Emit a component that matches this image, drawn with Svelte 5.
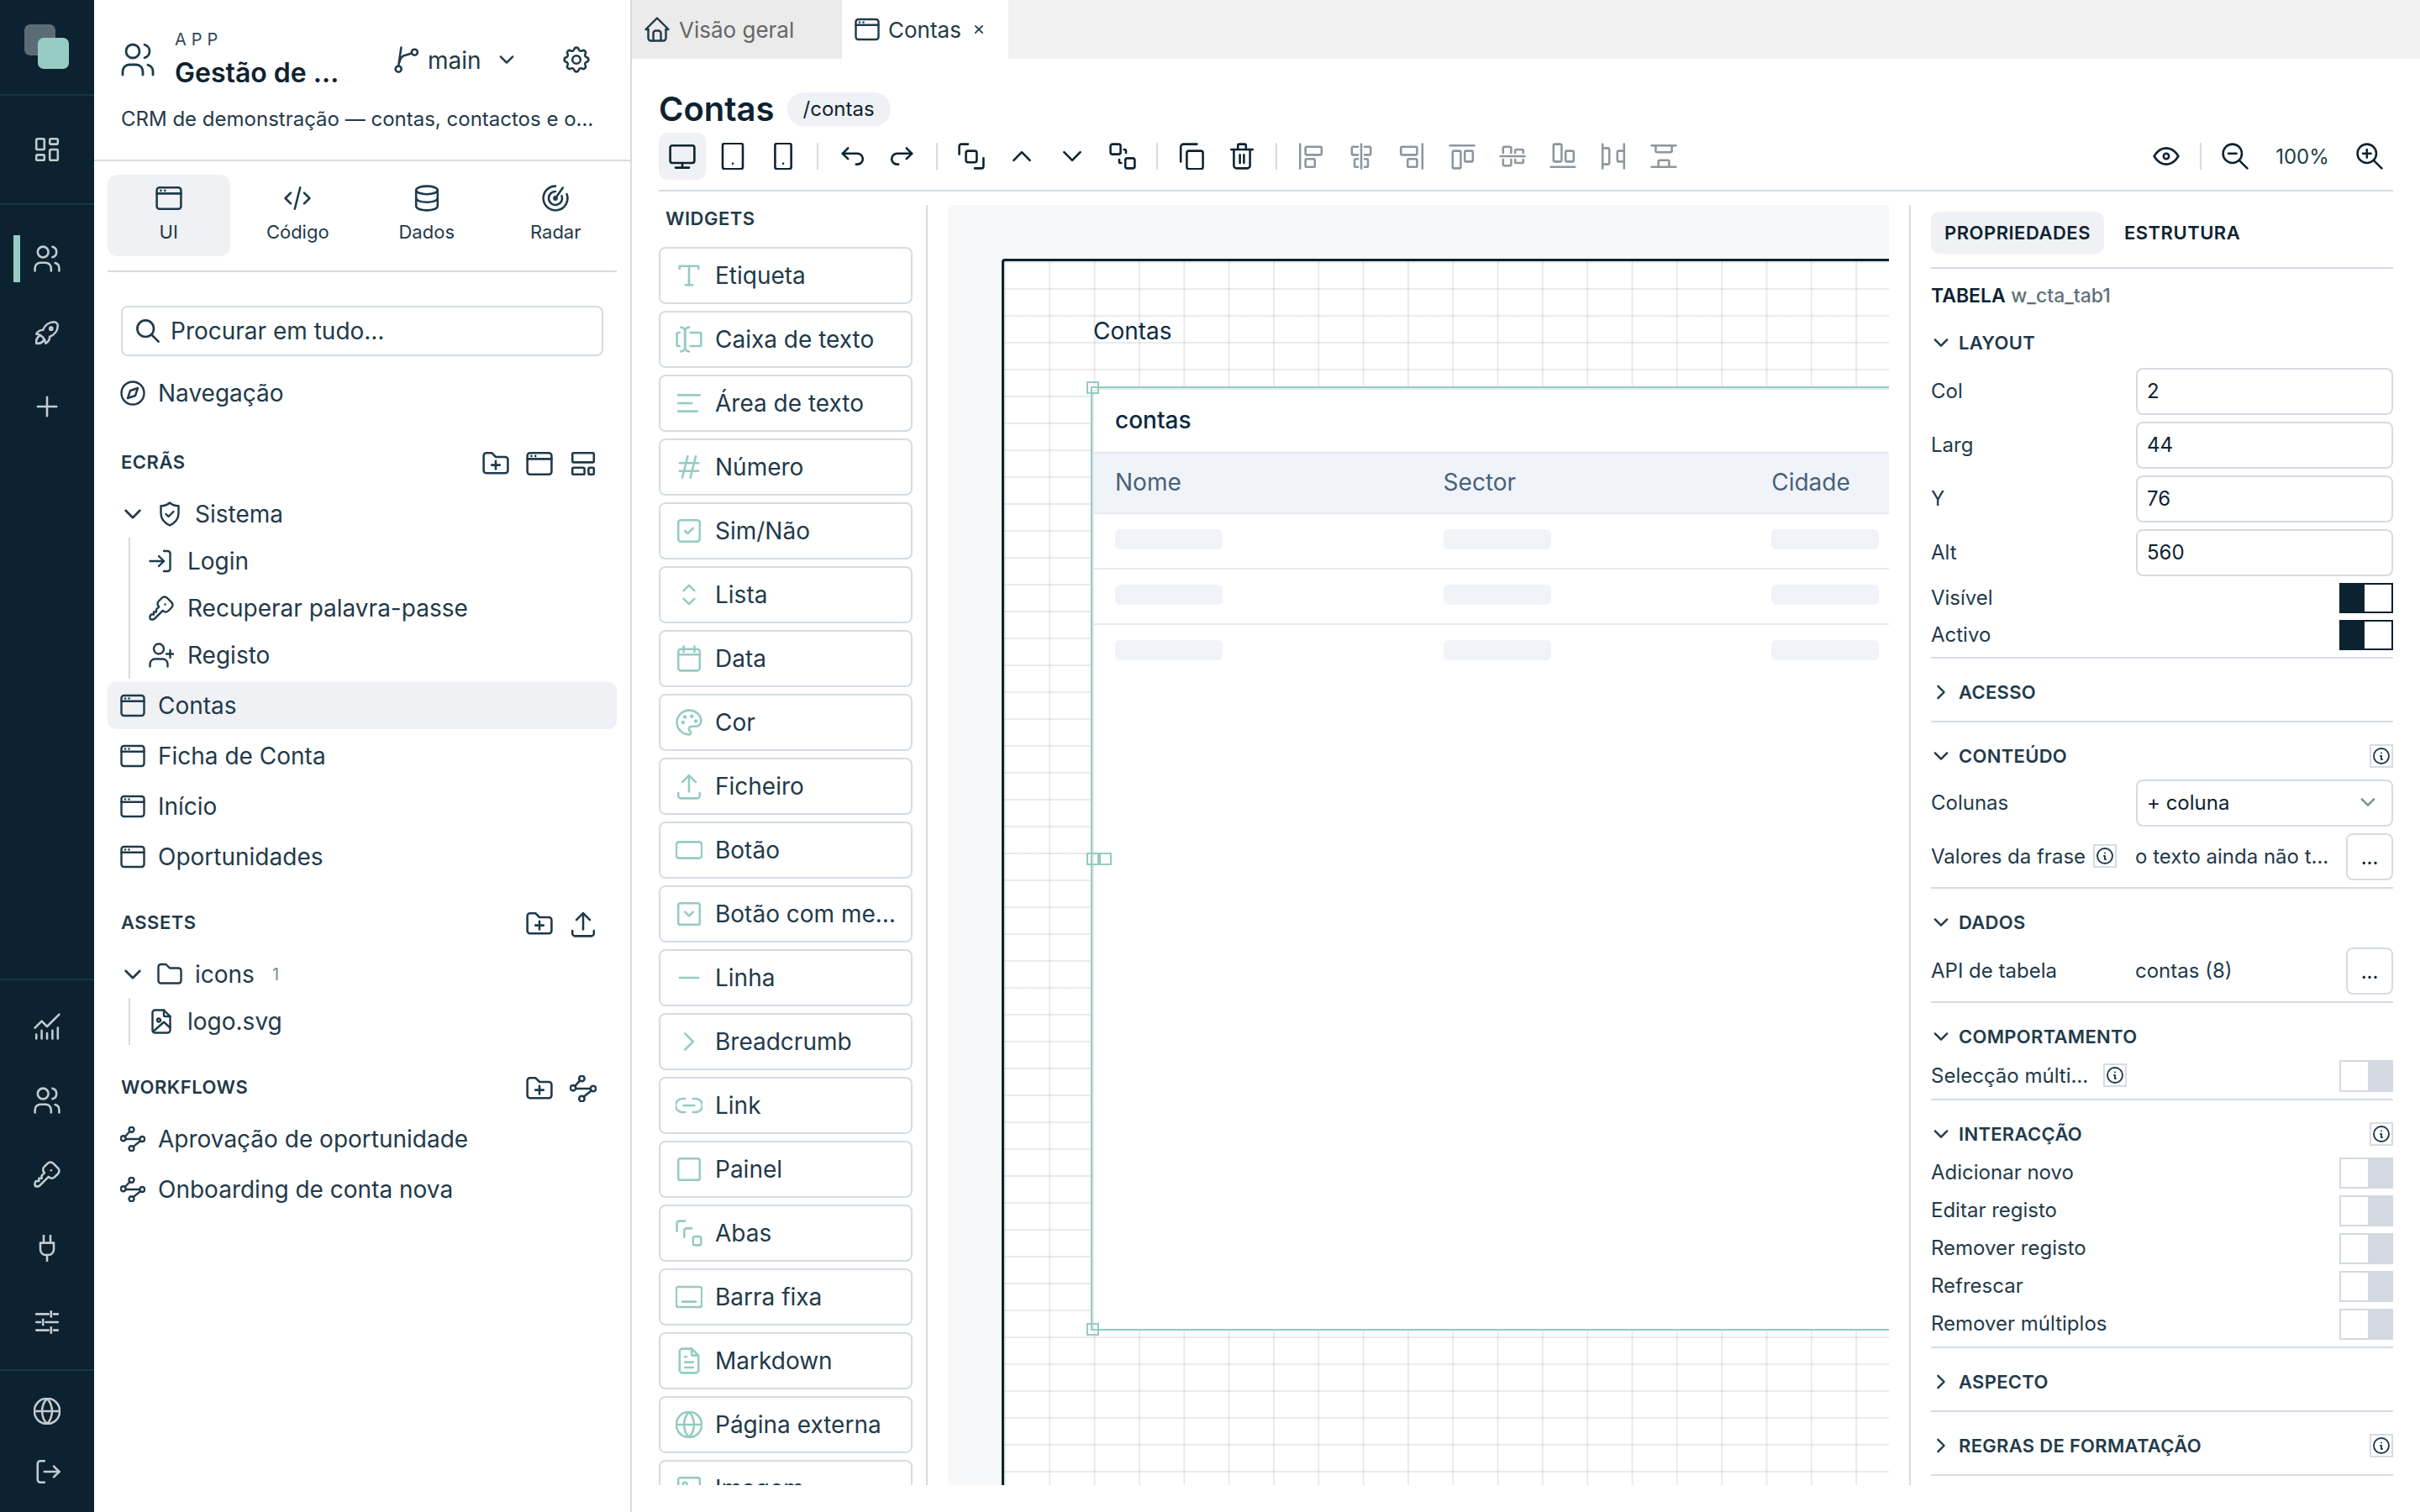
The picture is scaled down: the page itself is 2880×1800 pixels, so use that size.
<script>
  const c = (x, y, r) => `M${x - r} ${y}a${r} ${r} 0 1 0 ${r * 2} 0a${r} ${r} 0 1 0 ${-r * 2} 0`;
  const rr = (x, y, w, h, r = 1) =>
    `M${x + r} ${y}h${w - 2 * r}a${r} ${r} 0 0 1 ${r} ${r}v${h - 2 * r}a${r} ${r} 0 0 1 ${-r} ${r}h${-(w - 2 * r)}a${r} ${r} 0 0 1 ${-r} ${-r}v${-(h - 2 * r)}a${r} ${r} 0 0 1 ${r} ${-r}`;

  const folder = 'M5 4h4l3 3h7a2 2 0 0 1 2 2v8a2 2 0 0 1 -2 2h-14a2 2 0 0 1 -2 -2v-11a2 2 0 0 1 2 -2';
  const fileBody = 'M17 21h-10a2 2 0 0 1 -2 -2v-14a2 2 0 0 1 2 -2h7l5 5v11a2 2 0 0 1 -2 2z';

  const icons = {
    users: [c(9, 7, 4), 'M3 21v-2a4 4 0 0 1 4 -4h4a4 4 0 0 1 4 4v2', 'M16 3.13a4 4 0 0 1 0 7.75', 'M21 21v-2a4 4 0 0 0 -3 -3.85'],
    dashboard: [rr(4, 4, 6, 8), rr(4, 16, 6, 4), rr(14, 12, 6, 8), rr(14, 4, 6, 4)],
    rocket: ['M4 13a8 8 0 0 1 7 7a6 6 0 0 0 3 -5a9 9 0 0 0 6 -8a3 3 0 0 0 -3 -3a9 9 0 0 0 -8 6a6 6 0 0 0 -5 3', 'M7 14a6 6 0 0 0 -3 6a6 6 0 0 0 6 -3', c(15, 9, 1)],
    plus: ['M12 5v14', 'M5 12h14'],
    chart: ['M3 13l5 -5l4 4l9 -9', 'M4 21v-3', 'M8 21v-6', 'M12 21v-4', 'M16 21v-6', 'M20 21v-8'],
    key: ['M16.555 3.843l3.602 3.602a2.877 2.877 0 0 1 0 4.069l-2.643 2.643a2.877 2.877 0 0 1 -4.069 0l-.301 -.301l-6.558 6.558a2 2 0 0 1 -1.239 .578l-.175 .008h-1.172a1 1 0 0 1 -.993 -.883l-.007 -.117v-1.172a2 2 0 0 1 .467 -1.284l.119 -.13l.414 -.414h2v-2h2v-2l2.144 -2.144l-.301 -.301a2.877 2.877 0 0 1 0 -4.069l2.643 -2.643a2.877 2.877 0 0 1 4.069 0', 'M15 9h.01'],
    plug: ['M12 22v-5', 'M9.5 8v-6', 'M14.5 8v-6', 'M7 8h10v5a4 4 0 0 1 -4 4h-2a4 4 0 0 1 -4 -4z'],
    sliders: ['M4 6h9', 'M17 6h3', 'M15 4v4', 'M4 12h3', 'M11 12h9', 'M9 10v4', 'M4 18h9', 'M17 18h3', 'M15 16v4'],
    globe: [c(12, 12, 9.5), 'M12 2.5a14 14 0 0 0 0 19a14 14 0 0 0 0 -19', 'M2.5 12h19'],
    logout: ['M10 4h-3a2 2 0 0 0 -2 2v12a2 2 0 0 0 2 2h3', 'M10 12h11', 'M17 8l4 4l-4 4'],
    login: ['M14 4h3a2 2 0 0 1 2 2v12a2 2 0 0 1 -2 2h-3', 'M3 12h11', 'M10 8l4 4l-4 4'],
    branch: [c(6.5, 19, 2.2), c(18.5, 6.5, 2.2), 'M8.5 3l-2 13.8', 'M7.2 14c.4 -3 2 -5 5 -5.5l4 -1.2'],
    gear: ['M10.325 4.317c.426 -1.756 2.924 -1.756 3.35 0a1.724 1.724 0 0 0 2.573 1.066c1.543 -.94 3.31 .826 2.37 2.37a1.724 1.724 0 0 0 1.065 2.572c1.756 .426 1.756 2.924 0 3.35a1.724 1.724 0 0 0 -1.066 2.573c.94 1.543 -.826 3.31 -2.37 2.37a1.724 1.724 0 0 0 -2.572 1.065c-.426 1.756 -2.924 1.756 -3.35 0a1.724 1.724 0 0 0 -2.573 -1.066c-1.543 .94 -3.31 -.826 -2.37 -2.37a1.724 1.724 0 0 0 -1.065 -2.572c-1.756 -.426 -1.756 -2.924 0 -3.35a1.724 1.724 0 0 0 1.066 -2.573c-.94 -1.543 .826 -3.31 2.37 -2.37c1 .608 2.296 .07 2.572 -1.065', 'M9 12a3 3 0 1 0 6 0a3 3 0 0 0 -6 0'],
    window: [rr(3, 4, 18, 16, 2), 'M3 8.5h18', 'M6 6.3h.01', 'M9 6.3h.01'],
    code: ['M7 8l-4 4l4 4', 'M17 8l4 4l-4 4', 'M14 4l-4 16'],
    database: ['M4 6a8 3 0 1 0 16 0a8 3 0 1 0 -16 0', 'M4 6v6a8 3 0 0 0 16 0v-6', 'M4 12v6a8 3 0 0 0 16 0v-6'],
    radar: [c(12, 12, 1), 'M12 7a5 5 0 1 0 4.7 3.29', 'M12 3a9 9 0 1 0 8.46 5.92', 'M12 12l5.5 -7.8'],
    search: [c(10, 10, 7), 'M21 21l-6 -6'],
    compass: ['M8 16l2 -6l6 -2l-2 6l-6 2', c(12, 12, 9)],
    folderPlus: [folder, 'M12 10v6', 'M9 13h6'],
    folder: [folder],
    layout: [rr(4, 4, 16, 7), rr(4, 15, 9, 5), rr(16, 15, 4, 5)],
    shield: ['M12 3a10 10 0 0 0 7 2.5v6c0 4.5 -3 7.5 -7 9.5c-4 -2 -7 -5 -7 -9.5v-6a10 10 0 0 0 7 -2.5', 'M9 12l2 2l4 -4'],
    down: ['M6 9l6 6l6 -6'],
    right: ['M9 6l6 6l-6 6'],
    up: ['M6 15l6 -6l6 6'],
    userPlus: [c(10, 7, 4), 'M3 21v-2a4 4 0 0 1 4 -4h6a4 4 0 0 1 4 4v2', 'M19 8v6', 'M16 11h6'],
    fileImage: ['M14 3v4a1 1 0 0 0 1 1h4', fileBody, c(10, 11, 1.3), 'M5.5 20l8.5 -7.5l5 4.5'],
    upload: ['M4 17v2a2 2 0 0 0 2 2h12a2 2 0 0 0 2 -2v-2', 'M7 9l5 -5l5 5', 'M12 4v12'],
    flow: [c(11, 4.5, 2), c(4.5, 11.5, 2), c(19.5, 12, 2), c(11, 19.5, 2), 'M9.6 6l-3.7 4', 'M6.5 12h11', 'M18 13.5l-5.6 4.6'],
    home: ['M5 12h-2l9 -9l9 9h-2', 'M5 12v7a2 2 0 0 0 2 2h10a2 2 0 0 0 2 -2v-7', 'M9 21v-6a2 2 0 0 1 2 -2h2a2 2 0 0 1 2 2v6'],
    x: ['M18 6l-12 12', 'M6 6l12 12'],
    desktop: [rr(3, 4, 18, 13, 1.5), 'M7 20.5h10', 'M12 17v3.5'],
    tablet: [rr(4.5, 2.5, 15, 19, 1.5), 'M12 17.5h.01'],
    phone: [rr(6, 2.5, 12, 19, 1.5), 'M12 17.5h.01'],
    undo: ['M9 14l-4 -4l4 -4', 'M5 10h11a4 4 0 1 1 0 8h-1'],
    redo: ['M15 14l4 -4l-4 -4', 'M19 10h-11a4 4 0 1 0 0 8h1'],
    group: ['M3 10.5v-6a1.5 1.5 0 0 1 1.5 -1.5h5', rr(8, 8, 8, 8.5, 1.5), 'M21 13.5v6a1.5 1.5 0 0 1 -1.5 1.5h-5'],
    ungroup: [rr(3, 3, 7.5, 7.5, 1.5), rr(14, 13.5, 7, 7.5, 1.5), 'M13 7h.5a1 1 0 0 1 1 1v1.5', 'M11 17h-.5a1 1 0 0 1 -1 -1v-1.5'],
    tabs: ['M3 10.5v-6a1.5 1.5 0 0 1 1.5 -1.5h4.5', 'M8.5 15v-5a1.5 1.5 0 0 1 1.5 -1.5h4', rr(15, 14.5, 6, 6.5, 1.5)],
    copy: [rr(8.5, 8, 12, 13.5, 1.5), 'M4 16v-11a2 2 0 0 1 2 -2h10'],
    trash: ['M4 7h16', 'M10.5 11v6', 'M13.5 11v6', 'M6 7v12a2 2 0 0 0 2 2h8a2 2 0 0 0 2 -2v-12', 'M9 7v-3a1 1 0 0 1 1 -1h4a1 1 0 0 1 1 1v3'],
    alLeft: ['M4 3v18', rr(8, 5, 12, 6), rr(8, 14, 7, 6)],
    alCenter: ['M12 3v18', 'M9.5 5h-3.5a1 1 0 0 0 -1 1v4a1 1 0 0 0 1 1h3.5', 'M14.5 5h3.5a1 1 0 0 1 1 1v4a1 1 0 0 1 -1 1h-3.5', 'M9.5 14h-1.5a1 1 0 0 0 -1 1v4a1 1 0 0 0 1 1h1.5', 'M14.5 14h1.5a1 1 0 0 1 1 1v4a1 1 0 0 1 -1 1h-1.5'],
    alRight: ['M20 3v18', rr(4, 5, 12, 6), rr(9, 14, 7, 6)],
    alTop: ['M3 4h18', rr(5, 8, 6, 13), rr(14, 8, 6, 8)],
    alMiddle: ['M3 12h18', 'M5 9.5v-3.5a1 1 0 0 1 1 -1h4a1 1 0 0 1 1 1v3.5', 'M14 9.5v-1.5a1 1 0 0 1 1 -1h4a1 1 0 0 1 1 1v1.5', 'M5 14.5v3.5a1 1 0 0 0 1 1h4a1 1 0 0 0 1 -1v-3.5', 'M14 14.5v1.5a1 1 0 0 0 1 1h4a1 1 0 0 0 1 -1v-1.5'],
    alBottom: ['M3 20h18', rr(5, 3, 6, 13), rr(14, 8, 6, 8)],
    distH: ['M4 3v18', 'M4 6h4a1 1 0 0 1 1 1v10a1 1 0 0 1 -1 1h-4', 'M20 3v18', 'M20 8h-4a1 1 0 0 0 -1 1v6a1 1 0 0 0 1 1h4'],
    distV: ['M3 4h18', 'M6 4v4a1 1 0 0 0 1 1h10a1 1 0 0 0 1 -1v-4', 'M3 20h18', 'M8 20v-4a1 1 0 0 1 1 -1h6a1 1 0 0 1 1 1v4'],
    eye: ['M10 12a2 2 0 1 0 4 0a2 2 0 0 0 -4 0', 'M21 12c-2.4 4 -5.4 6 -9 6c-3.6 0 -6.6 -2 -9 -6c2.4 -4 5.4 -6 9 -6c3.6 0 6.6 2 9 6'],
    zoomOut: [c(10, 10, 7), 'M7 10h6', 'M21 21l-6 -6'],
    zoomIn: [c(10, 10, 7), 'M7 10h6', 'M10 7v6', 'M21 21l-6 -6'],
    info: [c(12, 12, 9), 'M12 8.5h.01', 'M11 12h1v4h1'],
    wLabel: ['M5 7v-2h14v2', 'M12 5v14', 'M9.5 19h5'],
    wInput: ['M12 3a3 3 0 0 0 -3 3v12a3 3 0 0 0 3 3', 'M6 3a3 3 0 0 1 3 3v12a3 3 0 0 1 -3 3', 'M13 7h7a1 1 0 0 1 1 1v8a1 1 0 0 1 -1 1h-7', 'M5 7h-1a1 1 0 0 0 -1 1v8a1 1 0 0 0 1 1h1'],
    wArea: ['M4 6h16', 'M4 12h10', 'M4 18h14'],
    wHash: ['M5 9h14', 'M5 15h14', 'M11 4l-4 16', 'M17 4l-4 16'],
    wCheck: [rr(4, 4, 16, 16, 2), 'M9 12l2 2l4 -4'],
    wSelect: ['M8 9l4 -4l4 4', 'M16 15l-4 4l-4 -4'],
    wDate: [rr(4, 5, 16, 16, 2), 'M16 3v4', 'M8 3v4', 'M4 9h16'],
    wColor: ['M12 21a9 9 0 0 1 0 -18c4.97 0 9 3.582 9 8c0 1.06 -.474 2.078 -1.318 2.828c-.844 .75 -1.989 1.172 -3.182 1.172h-2.5a2 2 0 0 0 -1 3.75a1.3 1.3 0 0 1 -1 2.25', c(7.5, 12, .6), c(9, 8, .6), c(14, 7.5, .6), c(17, 11, .6)],
    wButton: [rr(2.5, 6, 19, 12, 2)],
    wMenu: [rr(4, 4, 16, 16, 1.5), 'M9 10.5l3 3l3 -3'],
    wLine: ['M5 12h14'],
    wLink: ['M9 17h-2a5 5 0 0 1 0 -10h2', 'M15 7h2a5 5 0 1 1 0 10h-2', 'M8 12h8'],
    wPanel: [rr(4, 4, 16, 16, 1.5)],
    wBar: [rr(2.5, 4.5, 19, 15, 1.5), 'M7 15.5h10'],
    wDoc: ['M14 3v4a1 1 0 0 0 1 1h4', fileBody, 'M9 9h1', 'M9 13h6', 'M9 17h6'],
    wImage: [rr(4, 4, 16, 16, 1.5), c(9, 9, 1.5), 'M4 17l5 -4l4 3l3 -2l4 3']
  };

  const railTop = ['users', 'rocket', 'plus'];
  const railLow = ['chart', 'users', 'key', 'plug', 'sliders'];
  const modes = [
    { icon: 'window', label: 'UI', on: true },
    { icon: 'code', label: 'Código' },
    { icon: 'database', label: 'Dados' },
    { icon: 'radar', label: 'Radar' }
  ];
  const authScreens = [
    { icon: 'login', label: 'Login' },
    { icon: 'key', label: 'Recuperar palavra-passe' },
    { icon: 'userPlus', label: 'Registo' }
  ];
  const screens = ['Contas', 'Ficha de Conta', 'Início', 'Oportunidades'];

  const tools = [
    ['desktop', 'tablet', 'phone'],
    ['undo', 'redo'],
    ['group', 'up', 'down', 'ungroup'],
    ['copy', 'trash']
  ];
  const aligns = ['alLeft', 'alCenter', 'alRight', 'alTop', 'alMiddle', 'alBottom', 'distH', 'distV'];

  const widgets = [
    ['wLabel', 'Etiqueta'], ['wInput', 'Caixa de texto'], ['wArea', 'Área de texto'], ['wHash', 'Número'],
    ['wCheck', 'Sim/Não'], ['wSelect', 'Lista'], ['wDate', 'Data'], ['wColor', 'Cor'], ['upload', 'Ficheiro'],
    ['wButton', 'Botão'], ['wMenu', 'Botão com me…'], ['wLine', 'Linha'], ['right', 'Breadcrumb'], ['wLink', 'Link'],
    ['wPanel', 'Painel'], ['tabs', 'Abas'], ['wBar', 'Barra fixa'], ['wDoc', 'Markdown'], ['globe', 'Página externa'],
    ['wImage', 'Imagem']
  ];

  const layoutFields = [['Col', '2'], ['Larg', '44'], ['Y', '76'], ['Alt', '560']];
  const interactions = ['Adicionar novo', 'Editar registo', 'Remover registo', 'Refrescar', 'Remover múltiplos'];
</script>

{#snippet ic(name, cls = '')}
  <svg class="ic {cls}" viewBox="2 2 20 20" aria-hidden="true">
    {#each icons[name] as d}<path {d} />{/each}
  </svg>
{/snippet}

{#snippet sectionHead(title, open, info = false)}
  <div class="sec-head">
    {@render ic(open ? 'down' : 'right', 's24')}
    <span>{title}</span>
    {#if info}<span class="info push">{@render ic('info', 's20')}</span>{/if}
  </div>
{/snippet}

<div class="app">
  <nav class="rail">
    <div class="logo"><i class="sq back"></i><i class="sq front"></i></div>
    <div class="rail-home"><span class="rail-item">{@render ic('dashboard', 's32')}</span></div>
    <div class="rail-top">
      {#each railTop as name, i}
        <span class="rail-item" class:on={i === 0}>{@render ic(name, 's32')}</span>
      {/each}
    </div>
    <div class="rail-low">
      {#each railLow as name}
        <span class="rail-item">{@render ic(name, 's32')}</span>
      {/each}
    </div>
    <div class="rail-end">
      <span class="rail-item small">{@render ic('globe', 's32')}</span>
      <span class="rail-item small">{@render ic('logout', 's32')}</span>
    </div>
  </nav>

  <aside class="panel">
    <header class="app-head">
      <div class="app-row">
        <span class="ink">{@render ic('users', 's40 thin')}</span>
        <div class="app-name">
          <small>APP</small>
          <strong>Gestão de …</strong>
        </div>
        <div class="branch">
          {@render ic('branch', 's32')}
          <span>main</span>
          {@render ic('down', 's24')}
        </div>
        <span class="gear">{@render ic('gear', 's32')}</span>
      </div>
      <p class="desc">CRM de demonstração — contas, contactos e o…</p>
    </header>

    <div class="modes">
      {#each modes as m}
        <div class="mode" class:on={m.on}>
          {@render ic(m.icon, 's32')}
          <span>{m.label}</span>
        </div>
      {/each}
    </div>

    <div class="tree">
      <div class="search">
        {@render ic('search', 's28')}
        <span>Procurar em tudo…</span>
      </div>

      <div class="row first">{@render ic('compass', 's30')}<span>Navegação</span></div>

      <div class="tree-head ecras">
        <h4>ECRÃS</h4>
        <div class="head-icons">
          {@render ic('folderPlus', 's32')}
          {@render ic('window', 's32')}
          {@render ic('layout', 's32')}
        </div>
      </div>

      <div class="row branch-row">
        {@render ic('down', 's28')}
        {@render ic('shield', 's30')}
        <span>Sistema</span>
      </div>
      <div class="sub">
        {#each authScreens as s}
          <div class="row">{@render ic(s.icon, 's30')}<span>{s.label}</span></div>
        {/each}
      </div>
      <div class="screens">
        {#each screens as s, i}
          <div class="row" class:sel={i === 0}>{@render ic('window', 's30')}<span>{s}</span></div>
        {/each}
      </div>

      <div class="tree-head">
        <h4>ASSETS</h4>
        <div class="head-icons">
          {@render ic('folderPlus', 's32')}
          {@render ic('upload', 's32')}
        </div>
      </div>
      <div class="row branch-row">
        {@render ic('down', 's28')}
        {@render ic('folder', 's30')}
        <span>icons</span>
        <em>1</em>
      </div>
      <div class="sub">
        <div class="row">{@render ic('fileImage', 's30')}<span>logo.svg</span></div>
      </div>

      <div class="tree-head">
        <h4>WORKFLOWS</h4>
        <div class="head-icons">
          {@render ic('folderPlus', 's32')}
          {@render ic('flow', 's32')}
        </div>
      </div>
      <div class="screens flows">
        <div class="row">{@render ic('flow', 's30')}<span>Aprovação de oportunidade</span></div>
        <div class="row">{@render ic('flow', 's30')}<span>Onboarding de conta nova</span></div>
      </div>
    </div>
  </aside>

  <main class="main">
    <div class="tabs">
      <div class="tab">{@render ic('home', 's30')}<span>Visão geral</span></div>
      <div class="tab on">
        {@render ic('window', 's30')}
        <span>Contas</span>
        {@render ic('x', 's14')}
      </div>
    </div>

    <div class="work">
      <header class="work-head">
        <div class="title">
          <h1>Contas</h1>
          <span class="pill">/contas</span>
        </div>
        <div class="toolbar">
          {#each tools as group, g}
            {#each group as name, i}
              <span class="tool" class:on={g === 0 && i === 0}>{@render ic(name, 's32')}</span>
            {/each}
            <i class="tsep"></i>
          {/each}
          {#each aligns as name}
            <span class="tool off">{@render ic(name, 's32')}</span>
          {/each}
          <span class="tool push">{@render ic('eye', 's32')}</span>
          <i class="tsep"></i>
          <span class="tool">{@render ic('zoomOut', 's32')}</span>
          <span class="pct">100%</span>
          <span class="tool">{@render ic('zoomIn', 's32')}</span>
        </div>
      </header>

      <div class="body">
        <section class="widgets">
          <h4>WIDGETS</h4>
          <div class="widget-list">
            {#each widgets as [icon, label]}
              <div class="widget">{@render ic(icon, 's32')}<span>{label}</span></div>
            {/each}
          </div>
        </section>

        <section class="canvas">
          <div class="frame">
            <span class="cv-label">Contas</span>
            <div class="selection">
              <i class="hd tl"></i>
              <i class="hd ml"></i>
              <i class="hd ml2"></i>
              <i class="hd bl"></i>
              <div class="table">
                <div class="t-title">contas</div>
                <div class="t-head">
                  <span>Nome</span><span>Sector</span><span>Cidade</span>
                </div>
                {#each [0, 1, 2] as r}
                  <div class="t-row">
                    <span><b></b></span><span><b></b></span><span><b></b></span>
                  </div>
                {/each}
              </div>
            </div>
          </div>
        </section>

        <aside class="props">
          <div class="p-tabs">
            <span class="p-tab on">PROPRIEDADES</span>
            <span class="p-tab">ESTRUTURA</span>
          </div>
          <div class="p-id"><b>TABELA</b> <span>w_cta_tab1</span></div>

          <div class="sec">
            {@render sectionHead('LAYOUT', true)}
            <div class="sec-body first">
              {#each layoutFields as [label, value]}
                <div class="prop tall">
                  <label for={label}>{label}</label>
                  <div class="field" id={label}>{value}</div>
                </div>
              {/each}
              <div class="prop"><span>Visível</span><i class="sw on"><u></u></i></div>
              <div class="prop"><span>Activo</span><i class="sw on"><u></u></i></div>
            </div>
          </div>

          <div class="sec shut">{@render sectionHead('ACESSO', false)}</div>

          <div class="sec">
            {@render sectionHead('CONTEÚDO', true, true)}
            <div class="sec-body">
              <div class="prop tall">
                <span>Colunas</span>
                <div class="field select">+ coluna {@render ic('down', 's24 muted')}</div>
              </div>
              <div class="prop tall">
                <span class="with-info">Valores da frase <span class="info">{@render ic('info', 's20')}</span></span>
                <span class="value">o texto ainda não t…</span>
                <span class="more">...</span>
              </div>
            </div>
          </div>

          <div class="sec">
            {@render sectionHead('DADOS', true)}
            <div class="sec-body first">
              <div class="prop tall">
                <span>API de tabela</span>
                <span class="value">contas (8)</span>
                <span class="more">...</span>
              </div>
            </div>
          </div>

          <div class="sec">
            {@render sectionHead('COMPORTAMENTO', true)}
            <div class="sec-body">
              <div class="prop wide">
                <span class="with-info loose">Selecção múlti… <span class="info">{@render ic('info', 's20')}</span></span>
                <i class="sw"><u></u></i>
              </div>
            </div>
          </div>

          <div class="sec">
            {@render sectionHead('INTERACÇÃO', true, true)}
            <div class="sec-body">
              {#each interactions as label}
                <div class="prop mid"><span>{label}</span><i class="sw"><u></u></i></div>
              {/each}
            </div>
          </div>

          <div class="sec shut">{@render sectionHead('ASPECTO', false)}</div>
          <div class="sec shut">{@render sectionHead('REGRAS DE FORMATAÇÃO', false, true)}</div>
        </aside>
      </div>
    </div>
  </main>
</div>

<style>
  :global(body) {
    margin: 0;
    background: #fff;
  }

  .app {
    display: flex;
    width: 2880px;
    height: 1800px;
    overflow: hidden;
    font-family: Inter, "Noto Sans", sans-serif;
    font-size: 28px;
    color: #1f3a4a;
  }

  h1, h4, p {
    margin: 0;
  }

  i, em, u {
    font-style: normal;
    text-decoration: none;
  }

  .ic {
    display: block;
    flex: none;
    fill: none;
    stroke: currentColor;
    stroke-width: 1.6;
    stroke-linecap: round;
    stroke-linejoin: round;
  }

  .s14 { width: 14px; height: 14px; stroke-width: 2.4; }
  .s20 { width: 20px; height: 20px; stroke-width: 1.9; }
  .s24 { width: 24px; height: 24px; stroke-width: 2; }
  .s28 { width: 28px; height: 28px; stroke-width: 1.9; }
  .s30 { width: 30px; height: 30px; }
  .s32 { width: 32px; height: 32px; }
  .s40 { width: 40px; height: 40px; }
  .thin { stroke-width: 1.4; }
  .muted { color: #7d8a92; }

  /* rail */
  .rail {
    flex: none;
    width: 112px;
    display: flex;
    flex-direction: column;
    background: #0d2230;
    color: #c3cbd0;
  }

  .rail-item {
    position: relative;
    display: flex;
    align-items: center;
    justify-content: center;
    height: 88px;
  }

  .rail-item.small {
    height: 72px;
  }

  .rail-item.on::before {
    content: "";
    position: absolute;
    left: 16px;
    top: 16px;
    width: 8px;
    height: 56px;
    background: #96ccc3;
  }

  .logo {
    position: relative;
    height: 112px;
    border-bottom: 2px solid #1b3444;
  }

  .sq {
    position: absolute;
    width: 37px;
    height: 37px;
    border-radius: 7px;
  }

  .sq.back {
    left: 29px;
    top: 29px;
    background: #5c6c76;
  }

  .sq.front {
    left: 45px;
    top: 45px;
    background: #96ccc3;
  }

  .rail-home {
    display: flex;
    align-items: center;
    justify-content: center;
    height: 128px;
    border-bottom: 2px solid #1b3444;
  }

  .rail-top {
    flex: 1;
    padding-top: 20px;
  }

  .rail-low {
    padding: 11px 0 12px;
    border-top: 2px solid #1b3444;
  }

  .rail-end {
    padding: 12px 0;
    border-top: 2px solid #1b3444;
  }

  /* left panel */
  .panel {
    flex: none;
    width: 640px;
    box-sizing: border-box;
    border-right: 2px solid #d6dce3;
  }

  .app-head {
    box-sizing: border-box;
    height: 192px;
    padding: 35px 0 0 32px;
    border-bottom: 2px solid #d6dce3;
  }

  .app-row {
    display: flex;
    align-items: center;
    height: 72px;
  }

  .ink {
    display: block;
    color: #1f3a4a;
  }

  .app-name {
    display: flex;
    flex-direction: column;
    width: 259px;
    margin-left: 24px;
    color: #0d2230;
  }

  .app-name small {
    font-size: 20px;
    line-height: 24px;
    letter-spacing: 6px;
    color: #33495a;
  }

  .app-name strong {
    margin-top: 8px;
    font-size: 32px;
    line-height: 40px;
    font-weight: 600;
  }

  .branch {
    display: flex;
    align-items: center;
    gap: 10px;
    width: 203px;
  }

  .branch span {
    margin-top: 1px;
  }

  .branch .s24 {
    margin-left: 8px;
  }

  .desc {
    margin-top: 16px;
    font-size: 24px;
    line-height: 38px;
    white-space: nowrap;
  }

  .modes {
    display: flex;
    gap: 8px;
    margin: 16px 16px 0;
    padding-bottom: 17px;
    border-bottom: 2px solid #d6dce3;
  }

  .mode {
    flex: 1;
    display: flex;
    flex-direction: column;
    align-items: center;
    height: 97px;
    padding-top: 12px;
    box-sizing: border-box;
    border-radius: 12px;
    font-size: 22px;
    line-height: 32px;
  }

  .mode span {
    margin-top: 8px;
  }

  .mode.on {
    background: #eff1f5;
  }

  .tree {
    margin: 0 16px;
  }

  .search {
    display: flex;
    align-items: center;
    gap: 13px;
    box-sizing: border-box;
    height: 60px;
    margin: 40px 16px 0;
    padding-left: 16px;
    border: 2px solid #d6dce3;
    border-radius: 8px;
  }

  .row {
    display: flex;
    align-items: center;
    gap: 15px;
    height: 56px;
    padding-left: 15px;
    border-radius: 10px;
    white-space: nowrap;
  }

  .row.first {
    margin-top: 16px;
  }

  .row.sel {
    background: #eff1f5;
  }

  .tree-head {
    display: flex;
    align-items: center;
    justify-content: space-between;
    height: 40px;
    margin-top: 32px;
    padding: 0 24px 0 16px;
  }

  .tree-head.ecras {
    margin-top: 36px;
  }

  .tree-head h4 {
    padding-bottom: 5px;
    font-size: 22px;
    font-weight: 600;
    letter-spacing: .5px;
  }

  .head-icons {
    display: flex;
    gap: 20px;
  }

  .branch-row {
    margin-top: 12px;
    padding-left: 16px;
    gap: 15px;
  }

  .branch-row em {
    margin-left: 6px;
    font-size: 20px;
    color: #7d8a92;
  }

  .sub {
    margin-left: 25px;
    border-left: 2px solid #d6dce3;
  }

  .sub .row {
    padding-left: 22px;
    gap: 16px;
  }

  .screens {
    display: flex;
    flex-direction: column;
    gap: 4px;
    margin-top: 4px;
  }

  .screens.flows {
    margin-top: 12px;
  }

  /* main */
  .main {
    flex: 1;
    display: flex;
    flex-direction: column;
    min-width: 0;
  }

  .tabs {
    display: flex;
    height: 70px;
    background: #f2f2f2;
  }

  .tab {
    display: flex;
    align-items: center;
    gap: 11px;
    width: 250px;
    box-sizing: border-box;
    padding-left: 15px;
    background: #ebebeb;
    font-size: 26px;
    color: #666;
  }

  .tab .ic {
    color: #1f3a4a;
  }

  .tab.on {
    width: 198px;
    padding-left: 15px;
    gap: 10px;
    background: #fff;
    color: #1f3a4a;
  }

  .tab.on .s14 {
    margin-left: 4px;
  }

  .work {
    flex: 1;
    display: flex;
    flex-direction: column;
    min-height: 0;
    padding: 0 32px 32px;
  }

  .work-head {
    padding: 40px 0 12px;
    border-bottom: 2px solid #d6dce3;
  }

  .title {
    display: flex;
    align-items: center;
    gap: 15px;
    height: 40px;
    margin-bottom: 8px;
  }

  .title h1 {
    font-size: 40px;
    font-weight: 600;
    line-height: 40px;
    color: #0d2230;
  }

  .pill {
    padding: 0 19px;
    line-height: 40px;
    border-radius: 20px;
    background: #eff1f5;
    font-size: 24px;
    color: #0d2230;
  }

  .toolbar {
    display: flex;
    align-items: center;
    gap: 4px;
    height: 56px;
  }

  .tool {
    display: flex;
    align-items: center;
    justify-content: center;
    width: 56px;
    height: 56px;
    border-radius: 10px;
    color: #0d2230;
  }

  .tool.on {
    background: #eff1f5;
  }

  .tool.off {
    color: #8c979f;
  }

  .tool.push {
    margin-left: auto;
  }

  .tsep {
    width: 2px;
    height: 32px;
    margin: 0 8px;
    background: #d6dce3;
  }

  .pct {
    flex: 1;
    max-width: 96px;
    text-align: center;
    font-size: 24px;
  }

  .body {
    flex: 1;
    display: flex;
    gap: 24px;
    min-height: 0;
    margin-top: 16px;
  }

  .widgets {
    flex: none;
    width: 320px;
    box-sizing: border-box;
    padding-right: 16px;
    border-right: 2px solid #d6dce3;
    overflow: hidden;
  }

  .widgets h4 {
    height: 50px;
    padding-left: 8px;
    font-size: 22px;
    font-weight: 600;
    line-height: 32px;
    letter-spacing: .5px;
    box-sizing: border-box;
  }

  .widget-list {
    display: flex;
    flex-direction: column;
    gap: 8px;
  }

  .widget {
    flex: none;
    display: flex;
    align-items: center;
    gap: 15px;
    box-sizing: border-box;
    height: 68px;
    padding-left: 18px;
    border: 2px solid #d6dce3;
    border-radius: 8px;
    white-space: nowrap;
  }

  .widget .ic {
    color: #94cbc2;
  }

  .canvas {
    flex: 1;
    min-width: 0;
    padding: 64px 0 0 64px;
    background: #f6f8fa;
    overflow: hidden;
  }

  .frame {
    position: relative;
    box-sizing: border-box;
    width: 1400px;
    height: 1700px;
    border: 3px solid #0d2230;
    border-radius: 4px;
    background-color: #fff;
    background-image:
      linear-gradient(rgba(13, 34, 48, .09) 2px, transparent 2px),
      linear-gradient(90deg, rgba(13, 34, 48, .09) 2px, transparent 2px);
    background-size: 53.33px 32px;
  }

  .cv-label {
    position: absolute;
    left: 106px;
    top: 65px;
    line-height: 36px;
    color: #0d2a40;
  }

  .selection {
    position: absolute;
    left: 103px;
    top: 149px;
    box-sizing: border-box;
    width: 1300px;
    height: 1124px;
    border: 2px solid #94cbc2;
    background: #fff;
  }

  .hd {
    position: absolute;
    left: -7px;
    width: 15px;
    height: 15px;
    box-sizing: border-box;
    border: 2px solid #94cbc2;
  }

  .hd.tl { top: -8px; }
  .hd.ml { top: 553px; }
  .hd.ml2 { top: 553px; left: 8px; }
  .hd.bl { top: 1113px; }

  .table {
    height: 100%;
    box-sizing: border-box;
    border: 2px solid #e6eaf0;
    border-width: 2px 0 0 2px;
    border-radius: 8px 0 0 0;
    color: #0d2a40;
  }

  .t-title {
    box-sizing: border-box;
    height: 74px;
    padding: 18px 0 0 25px;
    line-height: 36px;
    font-weight: 500;
  }

  .t-head {
    display: flex;
    align-items: center;
    height: 74px;
    box-sizing: border-box;
    padding-bottom: 2px;
    border-top: 2px solid #e6eaf0;
    border-bottom: 2px solid #e6eaf0;
    background: #f0f3f8;
    color: #476279;
  }

  .t-head span,
  .t-row span {
    flex: none;
    width: 390.6px;
    box-sizing: border-box;
    padding-left: 25px;
  }

  .t-row {
    display: flex;
    box-sizing: border-box;
    height: 66px;
    padding-top: 18px;
    border-bottom: 2px solid #e6eaf0;
  }

  .t-row:last-child {
    border-bottom: 0;
  }

  .t-row b {
    display: block;
    width: 128px;
    height: 24px;
    border-radius: 6px;
    background: #f0f3f8;
  }

  /* properties */
  .props {
    flex: none;
    width: 576px;
    box-sizing: border-box;
    padding-left: 24px;
    border-left: 2px solid #d6dce3;
    font-size: 24px;
    overflow: hidden;
  }

  .p-tabs {
    display: flex;
    gap: 8px;
    margin-top: 8px;
    padding-bottom: 16px;
    border-bottom: 2px solid #d6dce3;
    font-size: 22px;
    font-weight: 600;
    letter-spacing: .5px;
    color: #0d2230;
  }

  .p-tab {
    padding: 0 16px;
    line-height: 50px;
    border-radius: 10px;
  }

  .p-tab.on {
    background: #eff1f5;
  }

  .p-id {
    padding-top: 16px;
    font-size: 23px;
    line-height: 32px;
  }

  .p-id b {
    font-weight: 600;
    color: #0d2230;
  }

  .p-id span {
    font-weight: 500;
    color: #5e7079;
  }

  .sec {
    padding: 20px 0 8px;
    border-bottom: 2px solid #d6dce3;
  }

  .sec.shut {
    padding-bottom: 14px;
  }

  .sec-head {
    display: flex;
    align-items: center;
    gap: 9px;
    height: 40px;
    font-size: 22px;
    font-weight: 600;
    letter-spacing: .3px;
  }

  .sec-body {
    display: flex;
    flex-direction: column;
    gap: 8px;
    margin-top: 8px;
  }

  .sec-body.first {
    margin-top: 10px;
  }

  .prop {
    display: flex;
    align-items: center;
    justify-content: space-between;
    height: 36px;
    white-space: nowrap;
  }

  .prop > span,
  .prop > label {
    margin-bottom: 2px;
  }

  .prop.tall { height: 56px; }
  .prop.wide { height: 38px; }
  .prop.mid { height: 37px; }

  .field {
    display: flex;
    align-items: center;
    justify-content: space-between;
    box-sizing: border-box;
    width: 306px;
    height: 56px;
    padding: 0 16px 2px 11px;
    border: 2px solid #d6dce3;
    border-radius: 8px;
    color: #0d2230;
  }

  .value {
    width: 251px;
    margin-left: auto;
    overflow: hidden;
  }

  .prop > .more {
    display: flex;
    align-items: center;
    justify-content: center;
    box-sizing: border-box;
    width: 56px;
    height: 56px;
    margin-bottom: 0;
    border: 2px solid #d6dce3;
    border-radius: 8px;
    color: #0d2230;
  }

  .with-info {
    display: flex;
    align-items: center;
    gap: 9px;
  }

  .with-info.loose {
    gap: 18px;
  }

  .info {
    display: flex;
    align-items: center;
    justify-content: center;
    box-sizing: border-box;
    width: 28px;
    height: 28px;
    border: 2px solid #d6dce3;
  }

  .info.push {
    margin-left: auto;
    font-weight: 400;
  }

  .sw {
    display: flex;
    flex: none;
    box-sizing: border-box;
    width: 64px;
    height: 100%;
    padding: 2px;
    background: #d3d9e0;
  }

  .sw u {
    display: block;
    width: 32px;
    height: 100%;
    background: #fff;
  }

  .sw.on {
    justify-content: flex-end;
    background: #0d2230;
  }
</style>
